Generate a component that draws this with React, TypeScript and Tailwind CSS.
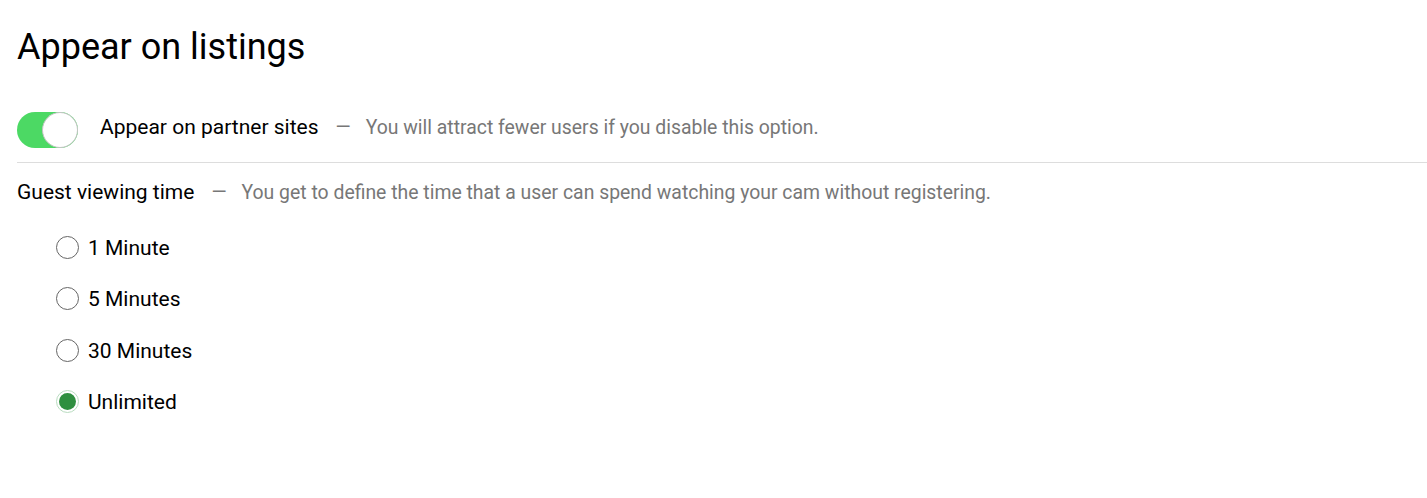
import React, { useState } from 'react';

const options = ['1 Minute', '5 Minutes', '30 Minutes', 'Unlimited'];

const Toggle: React.FC<{ on: boolean; onChange: () => void }> = ({ on, onChange }) => (
  <button
    type="button"
    onClick={onChange}
    className={`relative w-[61px] h-[36px] rounded-full shrink-0 ${on ? 'bg-[#4cd964]' : 'bg-[#e5e5e5]'}`}
  >
    <span
      className={`absolute top-0 h-[36px] w-[36px] rounded-full bg-white border border-[#c4c4c4] ${on ? 'left-[25px]' : 'left-0'}`}
    />
  </button>
);

const Radio: React.FC<{ checked: boolean; label: string; onSelect: () => void }> = ({
  checked,
  label,
  onSelect,
}) => (
  <label className="flex items-center h-[22px] cursor-pointer" onClick={onSelect}>
    {checked ? (
      <span className="w-[23px] h-[23px] rounded-full border-[1.5px] border-[#b9dcc0] bg-white flex items-center justify-center">
        <span className="w-[17px] h-[17px] rounded-full bg-[#2e8f3f]" />
      </span>
    ) : (
      <span className="w-[23px] h-[23px] rounded-full border-[1.5px] border-[#666] bg-white" />
    )}
    <span className="ml-[9px] mt-[3px] text-[21px] text-black">{label}</span>
  </label>
);

export default function App() {
  const [partner, setPartner] = useState(true);
  const [time, setTime] = useState('Unlimited');

  return (
    <div className="bg-white min-h-[498px] pl-[17px] pt-[27px] font-['Roboto',sans-serif]">
      <h1 className="text-[36px] leading-[40px] text-black">Appear on listings</h1>

      <div className="flex items-center mt-[45px] h-[36px]">
        <Toggle on={partner} onChange={() => setPartner(!partner)} />
        <div className="flex items-center mb-[5px]">
          <span className="ml-[22px] text-[21px] text-black">Appear on partner sites</span>
          <span className="ml-[17px] text-[19.4px] text-[#777]">—</span>
          <span className="ml-[15px] text-[19.4px] text-[#777]">
            You will attract fewer users if you disable this option.
          </span>
        </div>
      </div>

      <div className="mt-[14px] border-t border-[#ddd]" />

      <div className="flex items-center mt-[17px] h-[26px]">
        <span className="text-[21px] text-black">Guest viewing time</span>
        <span className="ml-[17px] text-[19.4px] text-[#777]">—</span>
        <span className="ml-[15px] text-[19.4px] text-[#777]">
          You get to define the time that a user can spend watching your cam without registering.
        </span>
      </div>

      <div className="flex flex-col gap-[29.5px] mt-[30px] pl-[39px]">
        {options.map((o) => (
          <Radio key={o} label={o} checked={time === o} onSelect={() => setTime(o)} />
        ))}
      </div>
    </div>
  );
}
